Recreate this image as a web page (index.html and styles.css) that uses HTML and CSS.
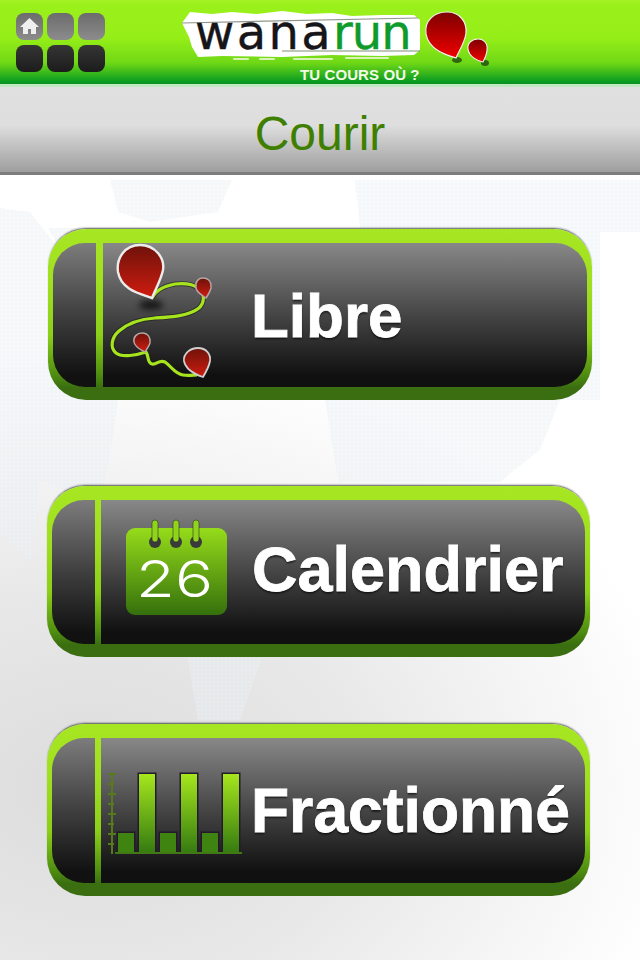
FILE: index.html
```html
<!DOCTYPE html>
<html lang="fr">
<head>
<meta charset="utf-8">
<title>Courir</title>
<link rel="stylesheet" href="styles.css">
</head>
<body>
<svg class="map" viewBox="0 0 640 960" aria-hidden="true">
  <defs>
    <pattern id="dots" width="4" height="4" patternUnits="userSpaceOnUse">
      <rect width="4" height="4" fill="#e9eff3"/>
      <circle cx="2" cy="2" r="1" fill="#f7f9fa"/>
    </pattern>
  </defs>
  <g fill="url(#dots)" opacity=".45">
    <path d="M110 180H232L218 212 150 222 118 212Z"/>
    <path d="M355 180H640V232H600V400H0V208L30 212 60 250 48 228H360Z"/>
    <path d="M0 400H118L108 470 96 505 40 480 30 560 0 530Z"/>
    <path d="M325 400H560L540 450 500 482H338Z"/>
    <path d="M188 658H262L240 720H198Z"/>
  </g>
</svg>
<header class="topbar">
  <nav class="grid">
    <span class="tile tile-light"><svg viewBox="0 0 27 27" class="home"><path d="M13.5 5 4 14h3v7h5v-5h3v5h5v-7h3z" fill="#efefef"/></svg></span>
    <span class="tile tile-light"></span>
    <span class="tile tile-light"></span>
    <span class="tile tile-dark"></span>
    <span class="tile tile-dark"></span>
    <span class="tile tile-dark"></span>
  </nav>
  <div class="logo">
    <svg class="brush" viewBox="0 0 240 50" aria-hidden="true">
      <path d="M0 12 8 1 30 3 50 1 75 3 100 0 125 3 150 2 170 5 200 4 232 4 238 9V39L232 44 200 45 150 44 100 46 40 45 16 46 10 36 7 26Z" fill="#fff"/>
      <path d="M0 12 236 7" stroke="#8f968b" stroke-width="1.2" fill="none"/>
      <path d="M100 40H238" stroke="#7f8f76" stroke-width="1.2" fill="none"/>
      <path d="M52 48H66M78 48H92M112 48H150M164 47H206" stroke="#d8f2b8" stroke-width="2" stroke-linecap="round" fill="none"/>
    </svg>
    <div class="brand"><span class="wana">wana</span><span class="run">run</span></div>
    <div class="slogan">TU COURS OÙ ?</div>
    <svg class="drops" viewBox="0 0 72 62" aria-hidden="true">
      <defs><linearGradient id="dr" x1="0" y1="0" x2="0" y2="1"><stop offset="0" stop-color="#7d0000"/><stop offset="1" stop-color="#f00000"/></linearGradient></defs>
      <ellipse cx="37" cy="54" rx="5" ry="3" fill="#1f4a10" opacity=".8"/>
      <ellipse cx="65" cy="57" rx="4" ry="3" fill="#1f4a10" opacity=".8"/>
      <path d="M27 6C39 6 47 15 46 27 45 36 39 45 36 52 26 49 9 44 6 28 4 15 14 6 27 6Z" fill="url(#dr)" stroke="#f2f2f2" stroke-width="1.2"/>
      <path d="M58 33c6 0 10 5 9 11 0 4-2 8-4 12-5-1-14-5-15-13-1-6 4-10 10-10Z" fill="url(#dr)" stroke="#f2f2f2" stroke-width="1.1"/>
    </svg>
  </div>
</header>
<div class="titlebar"><h1>Courir</h1></div>
<main class="menu">
  <a class="btn btn-libre">
    <span class="cap"></span><span class="sep"></span>
    <span class="face">
      <span class="slot">
        <svg class="ico ico-route" viewBox="0 0 115 150" aria-hidden="true">
          <defs>
            <linearGradient id="pin" x1="0" y1="0" x2="0" y2="1"><stop offset="0" stop-color="#6e120a"/><stop offset="1" stop-color="#d01c10"/></linearGradient>
            <filter id="soft" x="-50%" y="-50%" width="200%" height="200%"><feGaussianBlur stdDeviation="3"/></filter>
          </defs>
          <ellipse cx="46" cy="65" rx="12" ry="5" fill="#000" opacity=".7" filter="url(#soft)"/>
          <path d="M47 58C52 49 60 46 70 44 80 43 88 44 93 48 100 54 100 62 94 68 84 76 66 77 50 78 35 79 22 84 14 91 6 98 5 108 11 113 17 118 32 115 41 112 44 116 42 123 47 124 52 125 54 119 60 122 66 126 70 134 78 135 84 136 88 135 92 135" fill="none" stroke="#1a1a1a" stroke-width="5" opacity=".6"/>
          <path d="M47 58C52 49 60 46 70 44 80 43 88 44 93 48 100 54 100 62 94 68 84 76 66 77 50 78 35 79 22 84 14 91 6 98 5 108 11 113 17 118 32 115 41 112 44 116 42 123 47 124 52 125 54 119 60 122 66 126 70 134 78 135 84 136 88 135 92 135" fill="none" stroke="#a6e41e" stroke-width="3.2"/>
          <path d="M35 5C50 5 60 18 58 30 56 40 50 50 47 58 36 54 16 50 13 32 11 18 20 5 35 5Z" fill="url(#pin)" stroke="#ececec" stroke-width="2.4"/>
          <path d="M98 38c6 0 9 5 8 10-1 4-3 7-5 10-3-2-9-5-10-10-1-6 2-10 7-10Z" fill="url(#pin)" stroke="#b5a5a5" stroke-width="1.5"/>
          <path d="M37 93c6 0 9 5 8 10-1 3-3 6-5 9-3-2-10-4-11-10-1-5 3-9 8-9Z" fill="url(#pin)" stroke="#b5a5a5" stroke-width="1.5"/>
          <path d="M93 108c8 0 13 6 12 13-1 6-4 11-7 16-6-2-17-6-19-16-1-7 6-13 14-13Z" fill="url(#pin)" stroke="#cfcfcf" stroke-width="1.8"/>
        </svg>
      </span>
      <span class="label">Libre</span>
    </span>
  </a>
  <a class="btn btn-cal">
    <span class="cap"></span><span class="sep"></span>
    <span class="face">
      <span class="slot">
        <svg class="ico ico-cal" viewBox="0 0 115 114" aria-hidden="true">
          <defs><linearGradient id="cal" x1="0" y1="0" x2="0" y2="1"><stop offset="0" stop-color="#96dc1a"/><stop offset="1" stop-color="#35700c"/></linearGradient></defs>
          <rect x="6" y="13" width="101" height="87" rx="9" fill="url(#cal)"/>
          <g fill="#3a3a3a"><circle cx="35" cy="27" r="6"/><circle cx="56" cy="27" r="6"/><circle cx="76" cy="27" r="6"/></g>
          <g fill="#8fd41a" stroke="#2a2a2a" stroke-opacity=".55" stroke-width="1"><rect x="32" y="5" width="6" height="22" rx="3"/><rect x="53" y="5" width="6" height="22" rx="3"/><rect x="73" y="5" width="6" height="22" rx="3"/></g>
          <text class="day" x="16" y="82" textLength="77" lengthAdjust="spacingAndGlyphs">26</text>
        </svg>
      </span>
      <span class="label">Calendrier</span>
    </span>
  </a>
  <a class="btn btn-frac">
    <span class="cap"></span><span class="sep"></span>
    <span class="face">
      <span class="slot">
        <svg class="ico ico-bars" viewBox="0 0 140 90" aria-hidden="true">
          <defs><linearGradient id="bar" x1="0" y1="0" x2="0" y2="1"><stop offset="0" stop-color="#a6e61e"/><stop offset="1" stop-color="#347a10"/></linearGradient></defs>
          <g stroke="#567a1c" stroke-width="2" fill="none">
            <path d="M7 7V88"/>
            <path d="M3 8H11M3 18H9M3 28H11M3 38H9M3 48H11M3 58H9M3 68H11M3 78H9"/>
          </g>
          <g class="bars">
            <rect x="13" y="67" width="16" height="20" fill="#3f8310"/>
            <rect x="34" y="8" width="16" height="79" fill="url(#bar)"/>
            <rect x="55" y="67" width="16" height="20" fill="#3f8310"/>
            <rect x="76" y="8" width="16" height="79" fill="url(#bar)"/>
            <rect x="97" y="67" width="16" height="20" fill="#3f8310"/>
            <rect x="118" y="8" width="16" height="79" fill="url(#bar)"/>
          </g>
          <path d="M10 87H137" stroke="#3f7a12" stroke-width="2"/>
        </svg>
      </span>
      <span class="label">Fractionné</span>
    </span>
  </a>
</main>
</body>
</html>
```
FILE: styles.css
```css
html,body{margin:0;padding:0}
body{position:relative;width:640px;height:960px;overflow:hidden;font-family:"Liberation Sans",Arial,sans-serif;background:radial-gradient(ellipse 600px 440px at 90px 790px,#dcdcdc 0,#e8e8e8 45%,rgba(255,255,255,0) 100%),#fff}
.map{position:absolute;top:0;left:0;width:640px;height:960px}

.topbar{position:relative;height:84px;display:flex;background:linear-gradient(#a6f326 0,#9af01a 6%,#96ee18 45%,#6fd816 75%,#0a9c20 97%,#0a9022 100%);border-bottom:3px solid #bfe8c0}
.grid{display:grid;grid-template-columns:repeat(3,27px);grid-auto-rows:27px;column-gap:4px;row-gap:5px;padding:13px 0 0 16px}
.tile{display:block;border-radius:8px}
.tile-light{background:linear-gradient(#6c6c6c,#8c8c8c)}
.tile-dark{background:linear-gradient(#353535,#1c1c1c)}
.home{display:block;width:27px;height:27px}

.logo{position:relative;width:238px;margin-left:77px}
.brush{position:absolute;top:11px;left:0;width:240px;height:50px}
.brand{position:relative;padding:8px 0 0 13px;font-family:"DejaVu Sans",sans-serif;font-size:48px;line-height:48px;white-space:nowrap;-webkit-text-stroke:.4px currentColor}
.wana{color:#15151a;letter-spacing:2.4px}
.run{color:#0f9a2c;letter-spacing:-1px}
.slogan{position:relative;margin:11px 0 0 118px;font-size:15px;line-height:15px;font-weight:700;color:#f4fbe8;white-space:nowrap;letter-spacing:.1px}
.drops{position:absolute;top:6px;left:238px;width:72px;height:62px}

.titlebar{box-sizing:border-box;height:88px;padding-top:8px;display:flex;align-items:center;justify-content:center;background:linear-gradient(#e0e0e0 0,#dedede 45%,#9e9e9e 100%);border-bottom:3px solid #7d7d7d}
h1{margin:0;font-weight:400;font-size:48px;color:#3f7f00}

.menu{position:relative;display:flex;flex-direction:column;padding-top:54px}
.btn{box-sizing:border-box;display:flex;padding:14px 5px 13px;height:171px;width:543px;margin-left:47px;border-radius:38px;background:linear-gradient(#a6e622 0,#a0e020 30%,#8ccf18 62%,#4f8e10 85%,#3a6e10 93%);box-shadow:0 -2px 2px -1px rgba(0,0,0,.65)}
.btn-libre{width:544px;margin-left:48px}
.btn-cal{margin-top:86px}
.btn-frac{margin-top:67px;height:172px}
.cap{width:43px;flex:none;border-radius:32px 0 0 32px;background:linear-gradient(#7c7c7c 0,#3f3f3f 50%,#111 92%)}
.sep{width:7px;flex:none}
.btn-cal .sep,.btn-frac .sep{width:6px}
.face{flex:1;display:flex;align-items:center;border-radius:0 32px 32px 0;background:linear-gradient(#888 0,#454545 50%,#101010 92%)}
.slot{flex:none;display:flex;align-items:center;box-sizing:border-box}
.btn-libre .slot{width:148px;padding-left:2px}
.btn-cal .slot{width:151px;padding-left:19px}
.btn-frac .slot{width:150px;padding-left:4px}
.ico{display:block;flex:none}
.ico-route{width:115px;height:150px}
.ico-cal{width:115px;height:114px}
.ico-bars{width:140px;height:90px}
.bars rect{stroke:#241a2c;stroke-width:3;paint-order:stroke}
.day{font-family:"Inter",sans-serif;font-weight:300;font-size:51px;fill:#fff}
.label{font-weight:700;font-size:62px;color:#fff;white-space:nowrap;-webkit-text-stroke:.8px #fff;text-shadow:0 2px 2px rgba(0,0,0,.65)}
.btn-cal .label{font-size:63px;margin-bottom:6px}
.btn-frac .label{font-size:62.4px}
```
